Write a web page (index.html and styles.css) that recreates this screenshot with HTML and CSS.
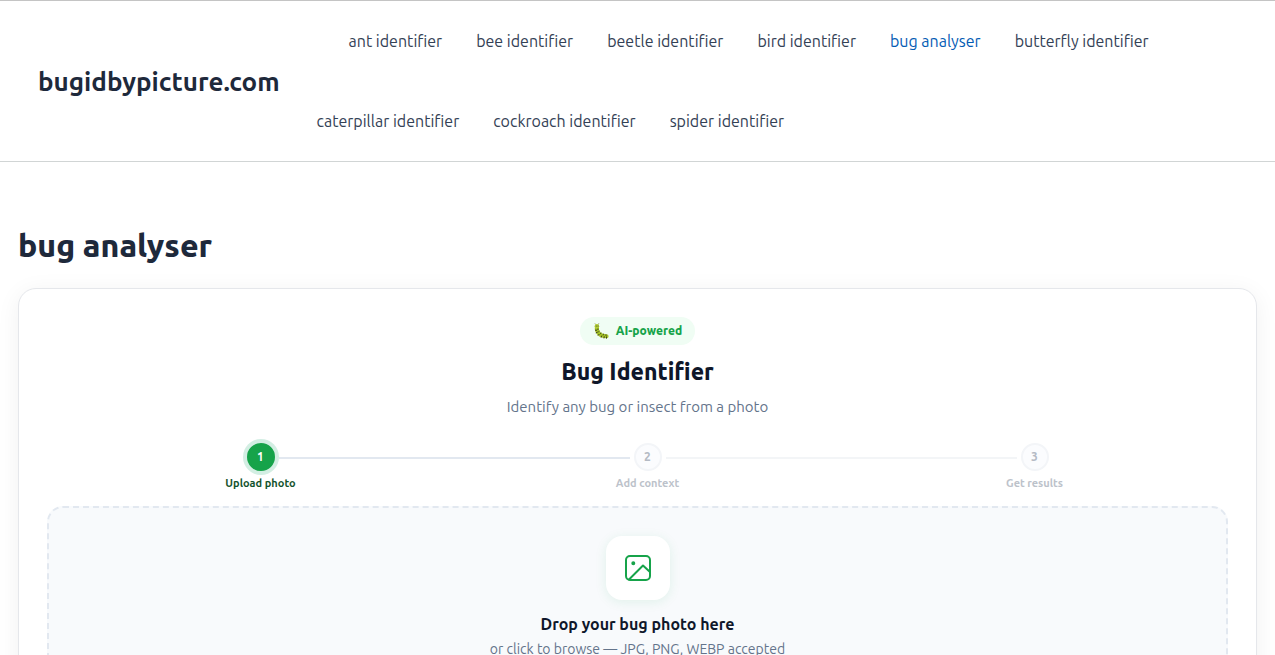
FILE: index.html
```
<!DOCTYPE html>
<html lang="en">
<head>
  <meta charset="UTF-8">
  <meta name="viewport" content="width=device-width, initial-scale=1">
  <title>bug analyser - bugidbypicture.com</title>
  <link rel="stylesheet" href="styles.css">
</head>
<body>
  <header class="site-header">
    <a class="site-title" href="#">bugidbypicture.com</a>
    <nav class="site-nav">
      <ul>
        <li><a href="#">ant identifier</a></li>
        <li><a href="#">bee identifier</a></li>
        <li><a href="#">beetle identifier</a></li>
        <li><a href="#">bird identifier</a></li>
        <li><a href="#" class="current" aria-current="page">bug analyser</a></li>
        <li><a href="#">butterfly identifier</a></li>
        <li><a href="#">caterpillar identifier</a></li>
        <li><a href="#">cockroach identifier</a></li>
        <li><a href="#">spider identifier</a></li>
      </ul>
    </nav>
  </header>

  <main class="container">
    <h1>bug analyser</h1>

    <section class="card">
      <div class="card-header">
        <span class="badge">
          <svg class="badge-icon" viewBox="0 0 16 16" aria-hidden="true">
            <path d="M3 1.6 2 .5M5 1.6 5.8.4" stroke="#5b6b1c" stroke-width=".7" fill="none"/>
            <path d="M4 3.6C3.5 6 4 8.5 6 10.6s4.500 2.700 7.600 2.700" stroke="#a5c428" stroke-width="4" stroke-linecap="round" fill="none"/>
            <circle cx="3.900" cy="3.200" r="2.300" fill="#b4cf35"/>
            <path d="M2.400 7.200h1.200M3.200 9.800l1.200-.6M5.200 12.300l.9-1M8.200 14.200l.4-1.200M11 15l.2-1.300M13.500 15.200v-1.300" stroke="#3d3d20" stroke-width="1" stroke-linecap="round"/>
            <path d="M4.500 6.200h.8M5.600 8.700l.7-.5M7.500 10.800l.4-.8M10.200 12l.2-.9M13 12.600v-.9" stroke="#4a5418" stroke-width="1" stroke-linecap="round"/>
            <circle cx="3.200" cy="2.900" r=".5" fill="#333"/>
            <circle cx="5" cy="2.900" r=".5" fill="#333"/>
          </svg>
          AI-powered
        </span>
        <h2>Bug Identifier</h2>
        <p>Identify any bug or insect from a photo</p>
      </div>

      <!-- Progress steps -->
      <ol class="steps">
        <li class="step active">
          <div class="step-marker"><span class="step-number">1</span></div>
          <span class="step-label">Upload photo</span>
        </li>
        <li class="step">
          <div class="step-marker"><span class="step-number">2</span></div>
          <span class="step-label">Add context</span>
        </li>
        <li class="step">
          <div class="step-marker"><span class="step-number">3</span></div>
          <span class="step-label">Get results</span>
        </li>
      </ol>

      <!-- Upload area -->
      <label class="dropzone" for="photoInput">
        <span class="dropzone-icon">
          <svg viewBox="0 0 28 28" width="28" height="28" fill="none" stroke="#16a34a" stroke-width="2" stroke-linecap="round" stroke-linejoin="round" aria-hidden="true">
            <rect x="2" y="2" width="24" height="24" rx="4"/>
            <path d="M5 25.500 19 11.500l7 6.500"/>
            <circle cx="9.300" cy="9.300" r="1" fill="#16a34a"/>
          </svg>
        </span>
        <span class="dropzone-title">Drop your bug photo here</span>
        <span class="dropzone-hint">or click to browse — JPG, PNG, WEBP accepted</span>
        <input class="file-input" type="file" id="photoInput" accept="image/jpeg,image/png,image/webp">
      </label>
    </section>
  </main>
</body>
</html>
```
FILE: styles.css
```
* {
  margin: 0;
  padding: 0;
  box-sizing: border-box;
}
body {
  font-family: Ubuntu, "Noto Sans", sans-serif;
  font-size: 16px;
  background: #fff;
  color: #334155;
}

/* Header */
.site-header {
  display: flex;
  align-items: center;
  gap: 20px;
  padding: 0 38px;
  border-top: 1px solid #c4c4c4;
  border-bottom: 1px solid #d1d5d5;
}
.site-title {
  flex: none;
  font-size: 26px;
  font-weight: 700;
  color: #1e293b;
  text-decoration: none;
}
.site-nav ul {
  display: flex;
  flex-wrap: wrap;
  list-style: none;
}
.site-nav li:first-child {
  margin-left: 32px;
}
.site-nav a {
  display: block;
  padding: 0 17px;
  line-height: 80px;
  color: #334155;
  text-decoration: none;
}
.site-nav a:hover,
.site-nav .current {
  color: #045cb4;
}

.container {
  padding: 60px 18px;
}
h1 {
  margin-bottom: 20px;
  font-size: 32px;
  line-height: 46px;
  font-weight: 800;
  color: #1e293b;
}

/* Identifier card */
.card {
  padding: 28px;
  border: 1px solid #e5e7eb;
  border-radius: 18px;
  background: #fff;
  box-shadow: 0 4px 24px rgba(0, 0, 0, 0.06);
}
.card-header {
  display: flex;
  flex-direction: column;
  align-items: center;
  margin-bottom: 24px;
  text-align: center;
}
.badge {
  display: flex;
  align-items: center;
  gap: 7px;
  padding: 0 13px;
  border-radius: 14px;
  background: #f0fdf4;
  color: #16a34a;
  font-size: 12px;
  line-height: 28px;
  font-weight: 800;
}
.badge-icon {
  width: 16px;
  height: 16px;
}
.card-header h2 {
  margin: 10px 0 6px;
  font-size: 23px;
  line-height: 34px;
  font-weight: 800;
  color: #0f172a;
}
.card-header p {
  font-size: 15px;
  line-height: 24px;
  color: #64748b;
}

/* Steps */
.steps {
  display: grid;
  grid-template-columns: repeat(3, 1fr);
  margin-bottom: 15px;
  padding-left: 20px;
  list-style: none;
}
.step {
  text-align: center;
}
.step-marker {
  display: flex;
  align-items: center;
  gap: 4px;
}
.step-marker::before,
.step-marker::after {
  content: "";
  flex: 1;
  height: 2px;
  margin-top: 2px;
  background: #f3f5f7;
}
.step.active .step-marker::after,
.step.active + .step .step-marker::before {
  background: #e2e8f0;
}
.step:first-child .step-marker::before,
.step:last-child .step-marker::after {
  background: none;
}
.step-number {
  width: 28px;
  height: 28px;
  border: 2px solid #f3f5f8;
  border-radius: 50%;
  background: #fbfcfe;
  color: #b4bac4;
  font-size: 12px;
  line-height: 24px;
  font-weight: 700;
}
.step-label {
  display: block;
  margin-top: 4px;
  font-size: 11px;
  line-height: 16px;
  font-weight: 700;
  color: #bcc2ca;
}
.step.active .step-number {
  border-color: #16a34a;
  background: #16a34a;
  box-shadow: 0 0 0 4px #d3eee3;
  color: #fff;
}
.step.active .step-label {
  color: #14532d;
}

/* Dropzone */
.dropzone {
  display: flex;
  flex-direction: column;
  align-items: center;
  padding: 28px;
  border: 2px dashed #e2e8f0;
  border-radius: 16px;
  background: #f8fafc;
  text-align: center;
  cursor: pointer;
}
.dropzone-icon {
  display: flex;
  align-items: center;
  justify-content: center;
  width: 64px;
  height: 64px;
  margin-bottom: 12px;
  border-radius: 16px;
  background: #fff;
  box-shadow: 0 2px 12px rgba(22, 163, 74, 0.1);
}
.dropzone-title {
  font-size: 16px;
  line-height: 24px;
  font-weight: 700;
  color: #0f172a;
}
.dropzone-hint {
  margin-top: 2px;
  font-size: 14px;
  line-height: 22px;
  color: #64748b;
}
.file-input {
  width: 1px;
  height: 1px;
  opacity: 0;
}
```
